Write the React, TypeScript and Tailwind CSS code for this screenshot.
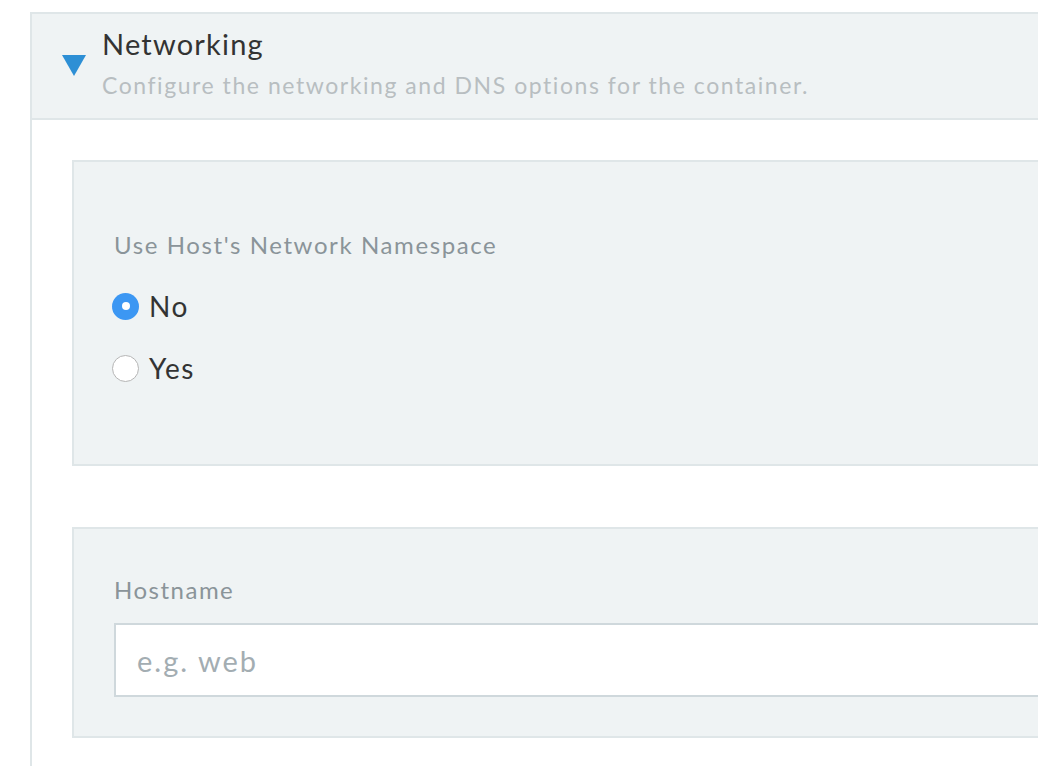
import React, { useState } from 'react'

export default function App() {
  const [hostNet, setHostNet] = useState('no')

  return (
    <div className="w-full h-[766px] overflow-hidden bg-white pl-[30px] pt-[12px]" style={{ fontFamily: 'Lato, "Open Sans", sans-serif' }}>
      <div className="w-[1100px] h-full border-l-2 border-t-2 border-[#dfe6e8]">
        {/* Header */}
        <div className="h-[106px] bg-[#eff3f4] border-b-2 border-[#dfe6e8] flex">
          <div className="w-[70px] flex justify-end pr-[16px] pt-[41px]">
            <svg width="24" height="21" viewBox="0 0 24 21">
              <polygon points="0,0 24,0 12,21" fill="#2d8fd5" />
            </svg>
          </div>
          <div className="pt-[12px]">
            <div className="text-[29px] leading-[36px] tracking-[1.2px] text-[#333]">Networking</div>
            <div className="text-[23px] leading-[30px] tracking-[1.55px] text-[#b8bec1] mt-[8px]">
              Configure the networking and DNS options for the container.
            </div>
          </div>
        </div>

        {/* Body */}
        <div className="pl-[40px] pt-[40px]">
          <div className="h-[306px] bg-[#eff3f4] border-2 border-[#dfe6e8] pl-[40px] pt-[68px]">
            <div className="text-[24px] leading-[30px] tracking-[1.6px] text-[#8a9499]">Use Host's Network Namespace</div>
            <div className="mt-[29px] -ml-[2px] flex flex-col gap-[28px]">
              {[
                { v: 'no', label: 'No' },
                { v: 'yes', label: 'Yes' },
              ].map((o) => (
                <label key={o.v} className="flex items-center gap-[10px] cursor-pointer">
                  <span
                    onClick={() => setHostNet(o.v)}
                    className={`w-[27px] h-[27px] rounded-full flex items-center justify-center ${
                      hostNet === o.v ? 'bg-[#3c97f3]' : 'bg-white border border-[#b5b5b5]'
                    }`}
                  >
                    {hostNet === o.v && <span className="w-[8px] h-[8px] rounded-full bg-white" />}
                  </span>
                  <span className="text-[28px] leading-[34px] tracking-[1.5px] text-[#333]">{o.label}</span>
                </label>
              ))}
            </div>
          </div>

          <div className="mt-[61px] h-[211px] bg-[#eff3f4] border-2 border-[#dfe6e8] pl-[40px] pt-[46px]">
            <div className="text-[24px] leading-[30px] tracking-[1.5px] text-[#8a9499]">Hostname</div>
            <input
              placeholder="e.g. web"
              className="mt-[18px] w-full h-[74px] bg-white border-2 border-[#cfd8dc] px-[21px] text-[29px] tracking-[2px] text-[#333] placeholder:text-[#a3adb2] outline-none"
            />
          </div>
        </div>
      </div>
    </div>
  )
}
